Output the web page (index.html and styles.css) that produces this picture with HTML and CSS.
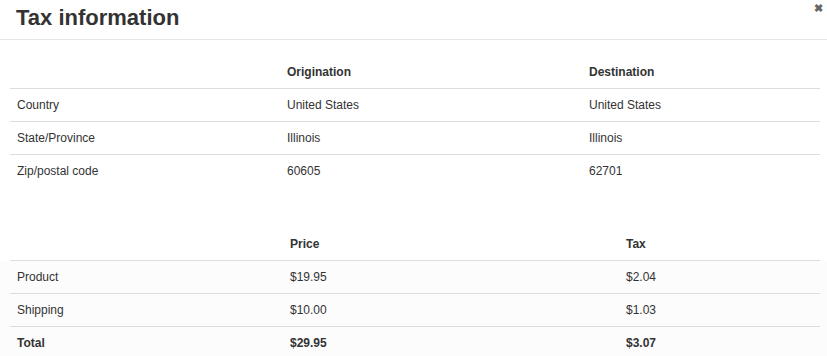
FILE: index.html
```html
<!DOCTYPE html>
<html lang="en">
<head>
    <meta charset="UTF-8">
    <meta name="viewport" content="width=device-width, initial-scale=1.0">
    <title>Tax information</title>
    <link rel="stylesheet" href="styles.css">
</head>
<body>

<div class="modal">
    <div class="modal-header">
        <h2>Tax information</h2>
        <button type="button" class="close">&#10006;</button>
    </div>

    <div class="modal-body">
        <!-- Locations -->
        <table class="tax-table location-table">
            <colgroup>
                <col class="col-a">
                <col class="col-b">
                <col>
            </colgroup>
            <thead>
                <tr>
                    <th></th>
                    <th>Origination</th>
                    <th>Destination</th>
                </tr>
            </thead>
            <tbody>
                <tr>
                    <td>Country</td>
                    <td>United States</td>
                    <td>United States</td>
                </tr>
                <tr>
                    <td>State/Province</td>
                    <td>Illinois</td>
                    <td>Illinois</td>
                </tr>
                <tr>
                    <td>Zip/postal code</td>
                    <td>60605</td>
                    <td>62701</td>
                </tr>
            </tbody>
        </table>

        <!-- Amounts -->
        <table class="tax-table amount-table">
            <colgroup>
                <col class="col-a">
                <col class="col-b">
                <col>
            </colgroup>
            <thead>
                <tr>
                    <th></th>
                    <th>Price</th>
                    <th>Tax</th>
                </tr>
            </thead>
            <tbody>
                <tr>
                    <td>Product</td>
                    <td>$19.95</td>
                    <td>$2.04</td>
                </tr>
                <tr>
                    <td>Shipping</td>
                    <td>$10.00</td>
                    <td>$1.03</td>
                </tr>
                <tr class="total">
                    <td>Total</td>
                    <td>$29.95</td>
                    <td>$3.07</td>
                </tr>
            </tbody>
        </table>
    </div>
</div>

</body>
</html>
```

FILE: styles.css
```css
/* Basic Reset */
* {
    box-sizing: border-box;
    margin: 0;
    padding: 0;
}

body {
    background: #fff;
    font-family: "Liberation Sans", Arial, sans-serif;
    color: #333;
    font-size: 12px;
}

/* Header */
.modal-header {
    display: flex;
    justify-content: space-between;
    align-items: flex-start;
    padding: 6px 4px 9px 16px;
    border-bottom: 1px solid #e5e5e5;
}

.modal-header h2 {
    font-size: 22px;
    line-height: 24px;
    font-weight: bold;
    color: #333;
}

.close {
    border: none;
    background: none;
    color: #666;
    font-size: 11px;
    font-weight: bold;
    line-height: 11px;
    margin-top: -3px;
    cursor: pointer;
}

/* Body */
.modal-body {
    padding: 16px 7px 0 10px;
}

.tax-table {
    width: 100%;
    border-collapse: collapse;
    table-layout: fixed;
}

.tax-table th,
.tax-table td {
    text-align: left;
    padding: 8px 7px;
    line-height: 16px;
}

.tax-table th {
    font-weight: bold;
    border-bottom: 1px solid #ddd;
}

.tax-table tbody tr + tr td {
    border-top: 1px solid #ddd;
}

.location-table .col-a { width: 270px; }
.location-table .col-b { width: 302px; }

.amount-table {
    margin-top: 41px;
}

.amount-table .col-a { width: 273px; }
.amount-table .col-b { width: 336px; }

/* Light band behind the amounts */
.amount-table tbody td {
    background: #fcfcfc;
}

.amount-table tbody td:first-child {
    box-shadow: -10px 0 0 #fcfcfc;
}

.amount-table tbody td:last-child {
    box-shadow: 7px 0 0 #fcfcfc;
}

.amount-table .total td {
    font-weight: bold;
}
```
